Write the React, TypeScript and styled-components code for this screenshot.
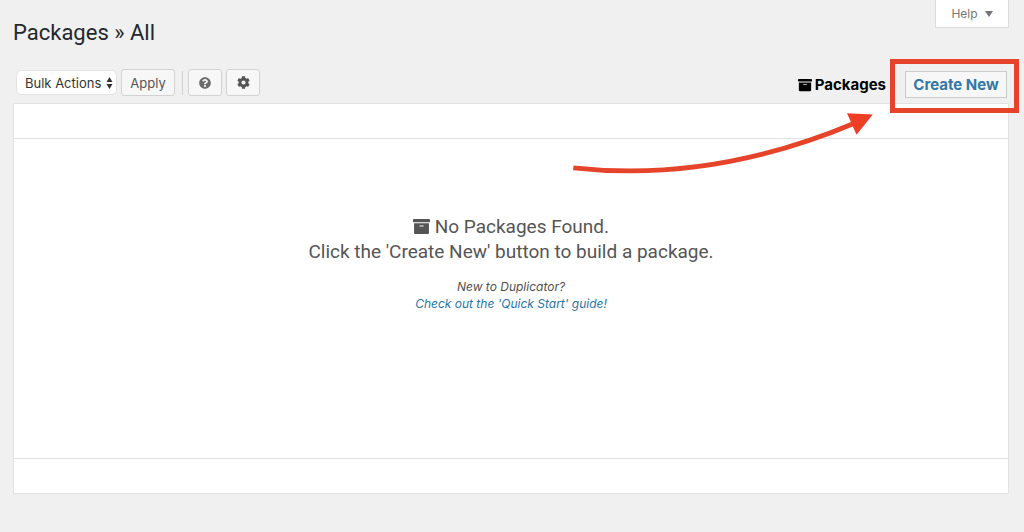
import React from "react";
import styled, { createGlobalStyle } from "styled-components";
import { FaArchive, FaCog, FaQuestionCircle } from "react-icons/fa";

const GlobalStyle = createGlobalStyle`
  *, *::before, *::after { box-sizing: border-box; }
  body {
    margin: 0;
    background: #f0f0f0;
    color: #505050;
    font: 13px/18px Inter, "Liberation Sans", sans-serif;
  }
`;

const Page = styled.div`
  padding: 0 15px 38px 13px;
`;

const Header = styled.header`
  display: flex;
  justify-content: space-between;
  align-items: flex-start;
`;

const Title = styled.h1`
  margin: 0;
  padding-top: 18px;
  font-family: Roboto, sans-serif;
  font-size: 22px;
  line-height: 30px;
  font-weight: 400;
  color: #23282d;
`;

const HelpTab = styled.button`
  display: flex;
  align-items: center;
  justify-content: center;
  gap: 7px;
  width: 74px;
  height: 28px;
  padding: 0;
  border: 1px solid #dcdcdc;
  border-top: 0;
  background: #fff;
  color: #757575;
  font: inherit;
  font-size: 12px;
`;

const Toolbar = styled.div`
  display: flex;
  align-items: center;
  justify-content: space-between;
  height: 27px;
  margin: 21px 2px 7px 3px;
`;

const Actions = styled.div`
  display: flex;
  align-items: center;
  gap: 4px;
`;

const SelectWrap = styled.label`
  position: relative;
  display: block;
`;

const Select = styled.select`
  appearance: none;
  display: block;
  width: 101px;
  height: 25px;
  padding: 0 8px;
  border: 1px solid #e2e2e2;
  border-radius: 5px;
  background: #fff;
  color: #333;
  font: inherit;
`;

const SelectArrows = styled.svg`
  position: absolute;
  right: 4px;
  top: 7px;
  pointer-events: none;
`;

const Button = styled.button<{ $wide?: boolean }>`
  display: flex;
  align-items: center;
  justify-content: center;
  width: ${(p) => (p.$wide ? 54 : 34)}px;
  height: 27px;
  padding: 0;
  border: 1px solid #d2d2d2;
  border-radius: 3px;
  background: #f7f7f7;
  color: #555;
  font: inherit;
`;

const Divider = styled.span`
  width: 1px;
  height: 24px;
  margin: 0 1px 0 3px;
  background: #cfcfcf;
`;

const Nav = styled.nav`
  display: flex;
  align-items: center;
  gap: 19px;
  padding-top: 4px;
  font-size: 15px;
  font-weight: 700;
`;

const Current = styled.span`
  display: flex;
  align-items: center;
  gap: 3px;
  color: #000;
`;

const CreateSpot = styled.div`
  position: relative;
`;

const CreateLink = styled.a`
  display: flex;
  align-items: center;
  justify-content: center;
  width: 102px;
  height: 27px;
  border: 1px solid #ccc;
  background: #f7f7f7;
  color: #3377a8;
  text-decoration: none;
`;

const Highlight = styled.span`
  position: absolute;
  inset: -12px -12px -15px -15px;
  border: 5px solid #e6432b;
  pointer-events: none;
`;

const Arrow = styled.svg`
  position: absolute;
  right: 133px;
  top: 39px;
  pointer-events: none;
`;

const Table = styled.table`
  width: 100%;
  border: 1px solid #e3e3e3;
  border-spacing: 0;
  background: #fff;
`;

const BarCell = styled.td<{ $edge: "top" | "bottom" }>`
  height: 35px;
  padding: 0;
  border-${(p) => (p.$edge === "top" ? "bottom" : "top")}: 1px solid #e3e3e3;
`;

const EmptyCell = styled.td`
  height: 319px;
  padding: 0 0 71px;
  text-align: center;
  vertical-align: middle;
`;

const Message = styled.p`
  margin: 0 0 14px;
  font-family: Roboto, sans-serif;
  font-size: 19px;
  line-height: 25px;
  color: #555;

  svg { vertical-align: -2px; }
`;

const Hint = styled.p`
  margin: 0;
  font-size: 12px;
  line-height: 17px;
  font-style: italic;
`;

const GuideLink = styled.a`
  color: #2874a6;
  text-decoration: none;
`;

export default function App() {
  return (
    <>
      <GlobalStyle />
      <Page>
        <Header>
          <Title>Packages » All</Title>
          <HelpTab type="button">
            Help
            <svg width="8" height="6" viewBox="0 0 8 6" aria-hidden="true">
              <path d="M0 0h8L4 6z" fill="currentColor" />
            </svg>
          </HelpTab>
        </Header>
        <Toolbar>
          <Actions>
            <SelectWrap>
              <Select aria-label="Bulk Actions">
                <option>Bulk Actions</option>
              </Select>
              <SelectArrows width="7" height="12" viewBox="0 0 7 12" aria-hidden="true">
                <path d="M3.5 0 6.5 4.9H.5zM3.5 12 .5 7.1h6z" fill="#333" />
              </SelectArrows>
            </SelectWrap>
            <Button type="button" $wide>Apply</Button>
            <Divider />
            <Button type="button" aria-label="Help">
              <FaQuestionCircle size={12} color="#6b6b6b" />
            </Button>
            <Button type="button" aria-label="Settings">
              <FaCog size={13} />
            </Button>
          </Actions>
          <Nav>
            <Current>
              <FaArchive size={14} />
              Packages
            </Current>
            <CreateSpot>
              <CreateLink href="#create">Create New</CreateLink>
              <Highlight />
              <Arrow width="304" height="66" viewBox="570 110 304 66" aria-hidden="true">
                <path
                  d="M573.3 167.8C665 178 760 163 855 123"
                  fill="none"
                  stroke="#e6432b"
                  strokeWidth="4.8"
                />
                <path d="M847 113.3 872.8 114.4 856.5 134.8z" fill="#ee3f26" />
              </Arrow>
            </CreateSpot>
          </Nav>
        </Toolbar>
        <Table>
          <thead>
            <tr>
              <BarCell $edge="top" />
            </tr>
          </thead>
          <tbody>
            <tr>
              <EmptyCell>
                <Message>
                  <FaArchive size={17} /> No Packages Found.
                  <br />
                  Click the 'Create New' button to build a package.
                </Message>
                <Hint>
                  New to Duplicator?
                  <br />
                  <GuideLink href="#quick-start">Check out the 'Quick Start' guide!</GuideLink>
                </Hint>
              </EmptyCell>
            </tr>
          </tbody>
          <tfoot>
            <tr>
              <BarCell $edge="bottom" />
            </tr>
          </tfoot>
        </Table>
      </Page>
    </>
  );
}
